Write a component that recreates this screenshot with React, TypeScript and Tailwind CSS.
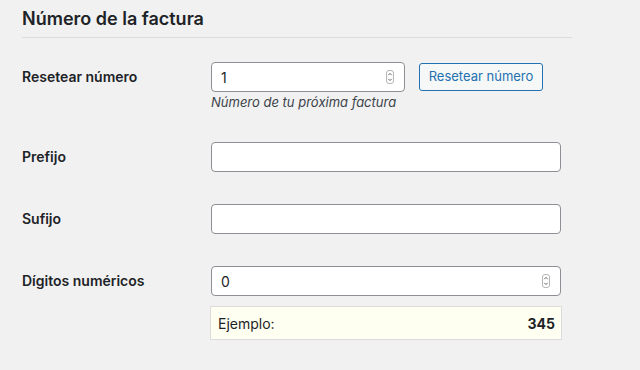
const Spinner = () => (
  <svg width="8" height="14" viewBox="0 0 8 14" className="shrink-0">
    <rect x="0.5" y="0.5" width="7" height="13" rx="2.5" fill="#fff" stroke="#b5b5b5" />
    <path d="M2.3 5.2 L4 3.4 L5.7 5.2" fill="none" stroke="#555" strokeWidth="0.9" />
    <path d="M2.3 8.8 L4 10.6 L5.7 8.8" fill="none" stroke="#555" strokeWidth="0.9" />
  </svg>
);

const Label = ({ children }: { children: React.ReactNode }) => (
  <div className="w-[189px] shrink-0 text-[14px] font-semibold leading-[20px] text-[#1d2327]">
    {children}
  </div>
);

const App = () => {
  return (
    <div
      className="w-[640px] h-[370px] overflow-hidden bg-[#f1f1f1] text-[#1d2327]"
      style={{ fontFamily: "Inter, 'Noto Sans', sans-serif" }}
    >
      <div className="ml-[22px] w-[550px]">
        <h2 className="pt-[7px] pb-[6px] text-[18px] leading-[24px] font-semibold border-b border-[#dcdcde]">
          Número de la factura
        </h2>

        {/* Resetear número */}
        <div className="mt-[24px] flex items-center">
          <Label>Resetear número</Label>
          <div className="flex h-[30px] w-[194px] items-center justify-between rounded-[4px] border border-[#8c8f94] bg-white pl-[9px] pr-[10px] text-[14px]">
            <span>1</span>
            <Spinner />
          </div>
          <button className="ml-[14px] h-[28px] w-[124px] rounded-[3px] border border-[#2271b1] bg-[#f6f7f7] text-[13px] text-[#2271b1]">
            Resetear número
          </button>
        </div>
        <p className="ml-[189px] mt-[1px] text-[13px] leading-[18px] italic text-[#3c434a]">
          Número de tu próxima factura
        </p>

        {/* Prefijo */}
        <div className="mt-[31px] flex items-center">
          <Label>Prefijo</Label>
          <div className="h-[30px] w-[350px] rounded-[4px] border border-[#8c8f94] bg-white" />
        </div>

        {/* Sufijo */}
        <div className="mt-[32px] flex items-center">
          <Label>Sufijo</Label>
          <div className="h-[30px] w-[350px] rounded-[4px] border border-[#8c8f94] bg-white" />
        </div>

        {/* Dígitos numéricos */}
        <div className="mt-[32px] flex items-center">
          <Label>Dígitos numéricos</Label>
          <div className="flex h-[30px] w-[350px] items-center justify-between rounded-[4px] border border-[#8c8f94] bg-white pl-[9px] pr-[10px] text-[14px]">
            <span>0</span>
            <Spinner />
          </div>
        </div>
        <div className="ml-[188px] mt-[10px] flex h-[34px] w-[352px] items-center justify-between border border-[#dcdcde] bg-[#fefff0] pl-[7px] pr-[6px] text-[14px]">
          <span>Ejemplo:</span>
          <span className="font-bold">345</span>
        </div>
      </div>
    </div>
  );
};

export default App;
